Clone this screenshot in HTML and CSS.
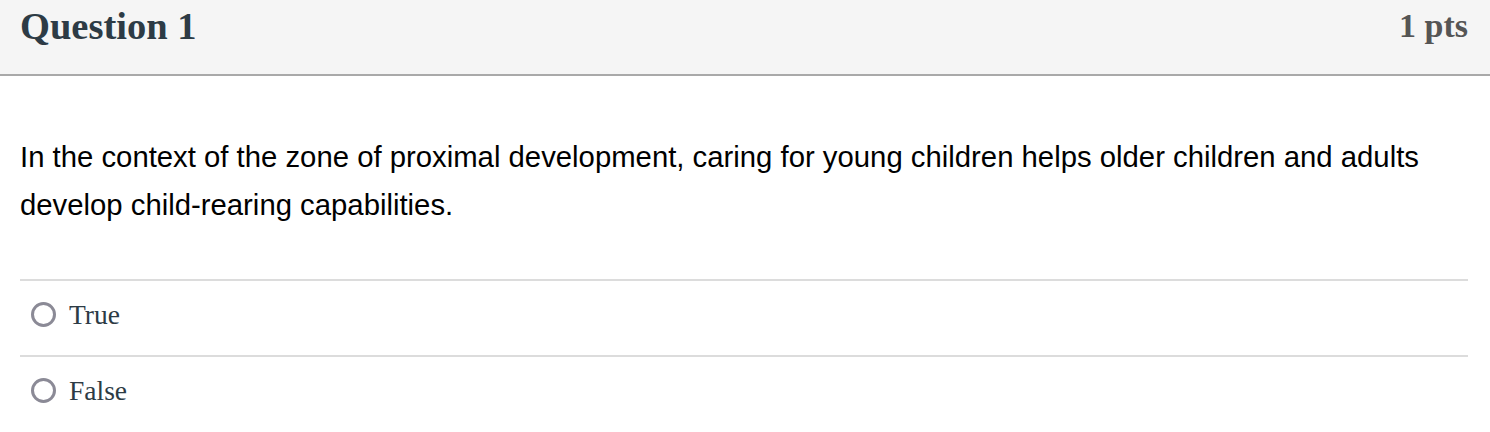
FILE: index.html
```html
<!DOCTYPE html>
<html>
<head>
<meta charset="utf-8">
<link rel="stylesheet" href="styles.css">
</head>
<body>
<div class="question">
  <div class="header">
    <h2 class="title">Question 1</h2>
    <div class="points">1 pts</div>
  </div>
  <div class="content">
    <p class="text">In the context of the zone of proximal development, caring for young children helps older children and adults develop child-rearing capabilities.</p>
    <div class="answers">
      <div class="answer"><span class="radio"></span><span class="label">True</span></div>
      <div class="answer"><span class="radio"></span><span class="label">False</span></div>
    </div>
  </div>
</div>
</body>
</html>
```
FILE: styles.css
```css
html, body { margin: 0; padding: 0; background: #fff; }
.question { width: 1490px; }
.header {
  background: #f5f5f5;
  height: 74px;
  border-bottom: 2px solid #a9a9a9;
  display: flex;
  justify-content: space-between;
  align-items: center;
  padding: 0 22px 0 20px;
  box-sizing: content-box;
}
.title {
  margin: 0;
  font-family: "Liberation Serif", serif;
  font-weight: bold;
  font-size: 38.5px;
  color: #2d3b45;
  position: relative;
  top: -11px;
}
.points {
  font-family: "Liberation Serif", serif;
  font-weight: bold;
  font-size: 34px;
  color: #555;
  position: relative;
  top: -11px;
}
.content { padding: 0 22px 0 20px; }
.text {
  margin: 0;
  padding-top: 57px;
  font-family: "Liberation Sans", Arial, sans-serif;
  font-size: 29.3px;
  line-height: 48px;
  color: #000;
  height: 144px;
  box-sizing: border-box;
}
.answers { margin-top: 59px; }
.answer {
  border-top: 2px solid #dcdcdc;
  box-sizing: border-box;
  height: 76px;
  display: flex;
  align-items: center;
  padding-left: 11px;
  padding-bottom: 7px;
}
.radio {
  width: 19px;
  height: 19px;
  border: 3.5px solid #8b8a96;
  border-radius: 50%;
  margin-right: 13px;
}
.label {
  font-family: "Liberation Serif", serif;
  font-size: 27.5px;
  color: #2d3b45;
}
```
